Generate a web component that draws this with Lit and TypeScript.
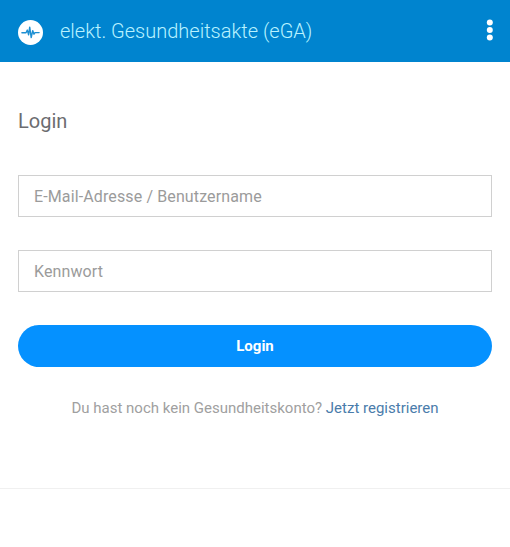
import { LitElement, html, css } from "lit";
import { customElement } from "lit/decorators.js";

@customElement("app-root")
export class AppRoot extends LitElement {
  static styles = css`
    :host { display: block; height: 547px; background: #fff; font-family: Roboto, "Liberation Sans", sans-serif; overflow: hidden; }
    * { box-sizing: border-box; }
    .bar { height: 62px; background: #0084cf; display: flex; align-items: center; padding: 0 17px 0 18px; color: #b8f2ff; }
    .logo { width: 25px; height: 25px; display: block; flex: none; margin-top: 3px; }
    .title { flex: 1; margin: 0 0 0 17px; font-size: 20px; font-weight: 300; line-height: 24px; white-space: nowrap; }
    .menu { border: 0; background: none; padding: 0; width: 7px; display: flex; }
    .dots { width: 7px; height: 22px; display: block; margin-top: -2px; }
    .content { height: 427px; padding: 47px 18px 0; border-bottom: 1px solid #f0f0f0; }
    .heading { margin: 0 0 42px; font-size: 20px; font-weight: 400; line-height: 24px; color: #6c6c70; }
    .field { display: block; width: 100%; height: 42px; margin: 0 0 33px; padding: 0 15px; border: 1px solid #d0d0d0; border-radius: 0; background: #fff; font: 400 16px Roboto, sans-serif; letter-spacing: 0.12px; color: #555; outline: 0; }
    .field::placeholder { color: #9b9b9b; opacity: 1; }
    .submit { display: block; width: 100%; height: 42px; border: 0; border-radius: 21px; background: #0591ff; color: #fff; font: 700 15px Roboto, sans-serif; padding: 0; }
    .hint { margin: 31px 0 0; text-align: center; font-size: 15px; line-height: 20px; color: #a0a0a0; white-space: nowrap; }
    .link { color: #4a7cab; text-decoration: none; }
  `;

  render() {
    return html`
      <header class="bar">
        <svg class="logo" viewBox="0 0 25 25">
          <circle cx="12.5" cy="12.5" r="12.5" fill="#fff" />
          <path d="M3.9 12.7H8l1.3-2.6 1.3 4.7 1.1-7.7 1.5 10.5 1.5-7 1.3 3.6 1-1.6h4.1" fill="none" stroke="#1d8fd2" stroke-width="1.4" stroke-linejoin="round" stroke-linecap="round" />
        </svg>
        <h1 class="title">elekt. Gesundheitsakte (eGA)</h1>
        <button class="menu" aria-label="Menü">
          <svg class="dots" viewBox="0 0 7 22" fill="#fff">
            <circle cx="3.8" cy="3.5" r="3" /><circle cx="3.8" cy="11" r="3" /><circle cx="3.8" cy="18.5" r="3" />
          </svg>
        </button>
      </header>
      <main class="content">
        <h2 class="heading">Login</h2>
        <input class="field" type="text" placeholder="E-Mail-Adresse / Benutzername" />
        <input class="field" type="password" placeholder="Kennwort" />
        <button class="submit">Login</button>
        <p class="hint">Du hast noch kein Gesundheitskonto? <a class="link" href="#">Jetzt registrieren</a></p>
      </main>
    `;
  }
}
